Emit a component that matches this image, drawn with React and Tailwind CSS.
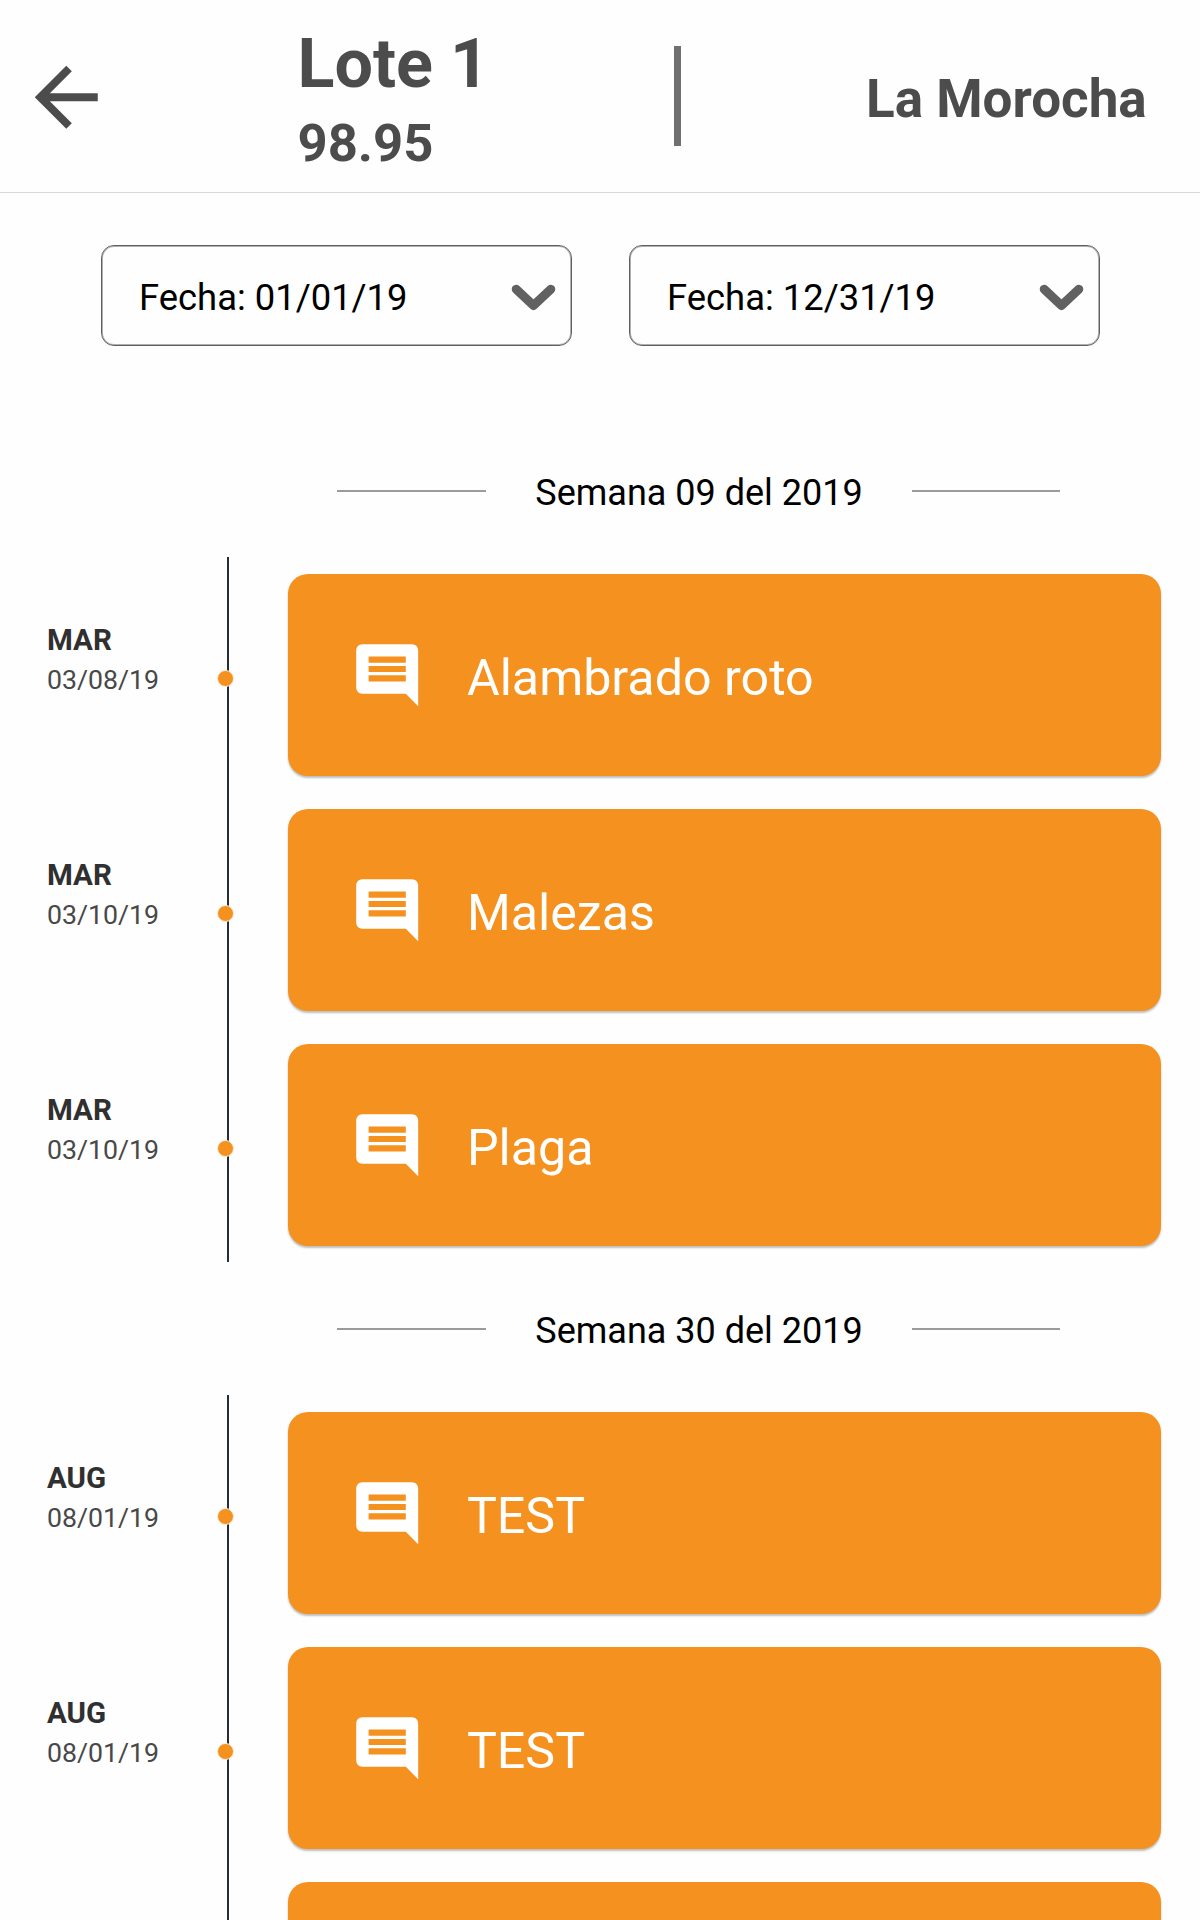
import { MdArrowBack, MdComment } from "react-icons/md";

const weeks = [
  {
    label: "Semana 09 del 2019",
    items: [
      { month: "MAR", date: "03/08/19", title: "Alambrado roto" },
      { month: "MAR", date: "03/10/19", title: "Malezas" },
      { month: "MAR", date: "03/10/19", title: "Plaga" },
    ],
  },
  {
    label: "Semana 30 del 2019",
    items: [
      { month: "AUG", date: "08/01/19", title: "TEST" },
      { month: "AUG", date: "08/01/19", title: "TEST" },
    ],
  },
];

function Header() {
  return (
    <header className="flex h-[193px] border-b border-[#d8d8d8] text-[#4c4c4c]">
      <button className="mt-[50px] ml-[18.5px] size-[94.5px] shrink-0" aria-label="Volver">
        <MdArrowBack className="size-full" />
      </button>
      <div className="ml-[184.5px] w-[376.5px] pt-6 font-bold">
        <h1 className="h-[83px] text-[68.3px] leading-[80px]">Lote 1</h1>
        <p className="h-[72px] text-[52.6px] leading-[72px]">98.95</p>
      </div>
      <div className="mt-[46px] h-[100px] w-[7px] shrink-0 bg-[#707070]" />
      <p className="ml-[185px] pt-[67px] text-[53px] leading-[64px] font-bold whitespace-nowrap">La Morocha</p>
    </header>
  );
}

function DateSelect({ value }) {
  return (
    <button className="flex h-[101px] w-[471px] items-center justify-between rounded-[13px] border border-[#606060] pr-[15px] pl-[37px] text-black shadow-[inset_0_0_0_1px_#b0b0b0]">
      <span className="mt-1 text-[36.4px] leading-[48px] whitespace-nowrap">Fecha: {value}</span>
      <svg className="mt-px size-[45px]" viewBox="0 0 45 45" fill="none" stroke="#616161" strokeWidth="9" strokeLinecap="round" strokeLinejoin="round">
        <path d="M5.2 15.2 L22.5 31.6 L39.8 15.2" />
      </svg>
    </button>
  );
}

function WeekHeading({ label }) {
  return (
    <div className="flex h-[133px] items-center pl-[337px] text-black">
      <div className="h-0.5 w-[149px] bg-[#9b9b9b]" />
      <h2 className="w-[426px] pt-[5px] text-center text-[36px] leading-[48px]">{label}</h2>
      <div className="h-0.5 w-[148px] bg-[#9b9b9b]" />
    </div>
  );
}

function Card({ children }) {
  return (
    <div className="mt-[17px] ml-[59px] flex h-[202px] w-[873px] items-center rounded-[20px] bg-[#f5911f] pl-[62px] text-white shadow-[0_2px_2px_rgba(0,0,0,0.25)]">
      {children}
    </div>
  );
}

function Entry({ month, date, title }) {
  return (
    <li className="flex h-[235px]">
      <div className="w-[227px] pt-[63px] pl-[47px]">
        <p className="h-10 text-[29.5px] leading-[40px] font-bold text-[#303030]">{month}</p>
        <p className="h-10 text-[26.7px] leading-[40px] text-[#484848]">{date}</p>
      </div>
      <div className="relative w-0.5 bg-[#262c38]">
        <span className="absolute top-[113px] -left-[10px] size-[17px] rounded-full border border-[#fdf0df] bg-[#f5911f]" />
      </div>
      <Card>
        <MdComment className="-mt-[0.5px] size-[74.4px]" />
        <span className="ml-[42.5px] pt-[5px] text-[50.2px] leading-[60px]">{title}</span>
      </Card>
    </li>
  );
}

export default function App() {
  return (
    <div className="h-[1920px] w-[1200px] overflow-hidden bg-[#fefefe] font-[Roboto,sans-serif]">
      <Header />
      <div className="mt-[52px] mb-[78px] flex gap-[57px] pl-[101px]">
        <DateSelect value="01/01/19" />
        <DateSelect value="12/31/19" />
      </div>
      {weeks.map((week) => (
        <section key={week.label}>
          <WeekHeading label={week.label} />
          <ul>
            {week.items.map((item, i) => (
              <Entry key={i} {...item} />
            ))}
          </ul>
        </section>
      ))}
      {/* Next card, only its top edge is within the viewport */}
      <div className="flex h-[235px] pl-[227px]">
        <div className="w-0.5 bg-[#262c38]" />
        <Card />
      </div>
    </div>
  );
}
